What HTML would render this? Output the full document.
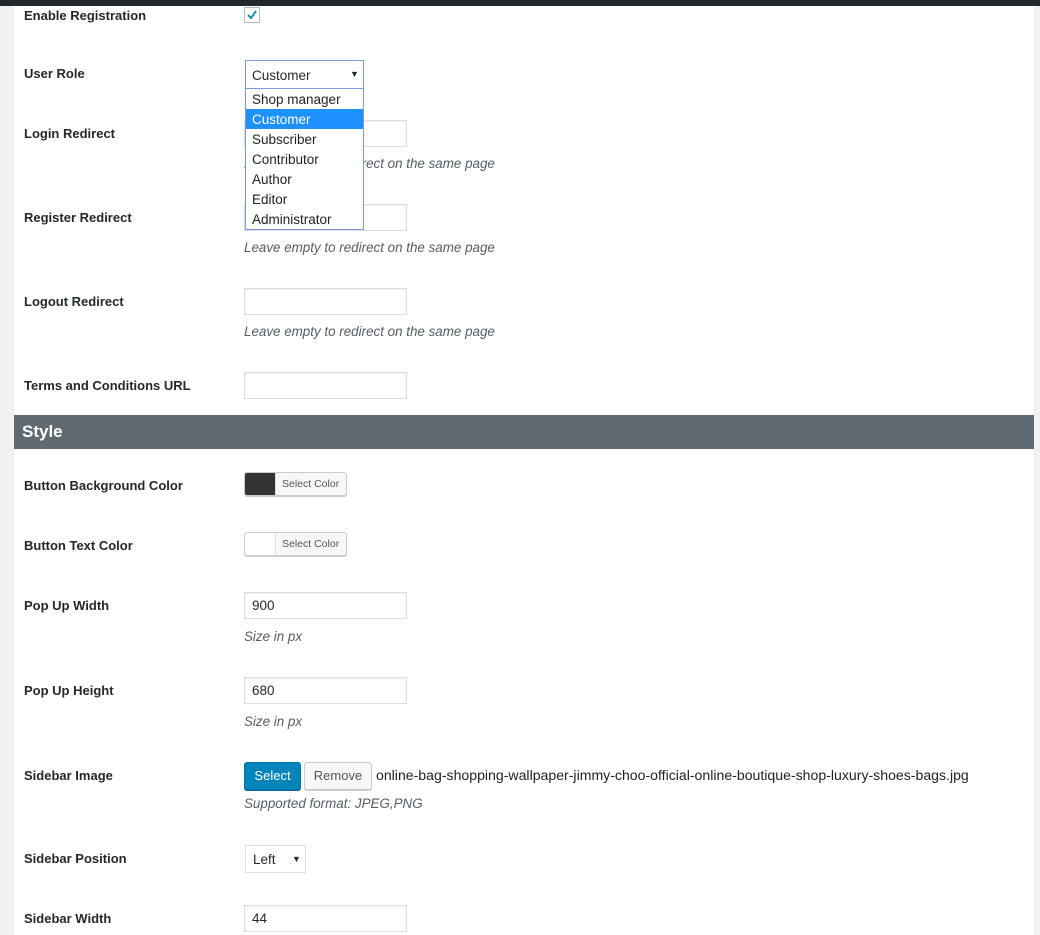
<!DOCTYPE html>
<html><head><style>
body{margin:0;width:1040px;height:935px;background:#f1f1f1;position:relative;overflow:hidden;font-family:"Liberation Sans",sans-serif;font-size:13px;color:#23282d}
.top{position:absolute;left:0;top:0;width:1040px;height:6px;background:#23282d}
.panel{position:absolute;left:14px;top:6px;width:1020px;height:929px;background:#fff}
.a{position:absolute;white-space:nowrap}
.lbl{position:absolute;left:24px;font-weight:bold;font-size:13px;color:#23282d}
.inp{position:absolute;left:244px;width:163px;height:27px;border:1px solid #ddd;background:#fff;box-shadow:inset 0 1px 2px rgba(0,0,0,.07);font-size:13.5px;line-height:25px;padding-left:7px;box-sizing:border-box}
.desc{position:absolute;left:244px;font-style:italic;color:#555d66;font-size:13.4px}
.bar{position:absolute;left:14px;top:415px;width:1020px;height:34px;background:#5f6a73;color:#fff;font-weight:bold;font-size:17px;line-height:34px;padding-left:8px;box-sizing:border-box}
.cp{position:absolute;left:244px;width:101px;height:22px;border:1px solid #ccc;border-radius:3px;background:#f7f7f7;box-shadow:0 1px 0 #ccc;overflow:hidden}
.cp .sw{position:absolute;left:0;top:0;width:30px;height:22px;border-right:1px solid #ddd}
.cp .t{position:absolute;left:37px;top:5px;font-size:10.5px;color:#555}
.dd{position:absolute;left:245px;top:88px;width:117px;height:140px;border:1px solid #7a9cd3;background:#fff}
.dd div{height:20px;line-height:21px;padding-left:6px;font-size:13.5px;color:#222}
.dd .s{background:#1e90ff;color:#fff}
</style></head><body>
<div class="top"></div>
<div class="panel"></div>

<div class="lbl" style="top:8px">Enable Registration</div>
<div class="a" style="left:244px;top:7px;width:14px;height:14px;border:1px solid #b4b9be;background:#fff"></div>
<svg class="a" style="left:245px;top:8px" width="14" height="14"><path d="M3 7 L6 10 L11 3" stroke="#1e8cbe" stroke-width="2" fill="none"/></svg>

<div class="lbl" style="top:66px">User Role</div>
<div class="a" style="left:245px;top:60px;width:117px;height:27px;border:1px solid #7a9cd3;background:#fff"><span class="a" style="left:6px;top:7px;font-size:13.5px">Customer</span><span class="a" style="left:104px;top:8px;font-size:9px">▼</span></div>

<div class="lbl" style="top:126px">Login Redirect</div>
<div class="inp" style="top:120px"></div>
<div class="desc" style="top:156px">Leave empty to redirect on the same page</div>

<div class="lbl" style="top:210px">Register Redirect</div>
<div class="inp" style="top:204px"></div>
<div class="desc" style="top:240px">Leave empty to redirect on the same page</div>

<div class="dd"><div>Shop manager</div><div class="s">Customer</div><div>Subscriber</div><div>Contributor</div><div>Author</div><div>Editor</div><div>Administrator</div></div>

<div class="lbl" style="top:294px">Logout Redirect</div>
<div class="inp" style="top:288px"></div>
<div class="desc" style="top:324px">Leave empty to redirect on the same page</div>

<div class="lbl" style="top:378px">Terms and Conditions URL</div>
<div class="inp" style="top:372px"></div>

<div class="bar">Style</div>

<div class="lbl" style="top:478px">Button Background Color</div>
<div class="cp" style="top:472px"><div class="sw" style="background:#333"></div><span class="t">Select Color</span></div>

<div class="lbl" style="top:538px">Button Text Color</div>
<div class="cp" style="top:532px"><div class="sw" style="background:#fff"></div><span class="t">Select Color</span></div>

<div class="lbl" style="top:598px">Pop Up Width</div>
<div class="inp" style="top:592px">900</div>
<div class="desc" style="top:629px">Size in px</div>

<div class="lbl" style="top:683px">Pop Up Height</div>
<div class="inp" style="top:677px">680</div>
<div class="desc" style="top:714px">Size in px</div>

<div class="lbl" style="top:768px">Sidebar Image</div>
<div class="a" style="left:244px;top:762px;width:55px;height:26px;background:#0085ba;border:1px solid #0073aa;border-radius:3px;color:#fff;line-height:26px;text-align:center;box-shadow:0 1px 0 #006799">Select</div>
<div class="a" style="left:304px;top:762px;width:66px;height:26px;background:#f7f7f7;border:1px solid #ccc;border-radius:3px;color:#555;line-height:26px;text-align:center;box-shadow:0 1px 0 #ccc">Remove</div>
<div class="a" style="left:376px;top:767px;font-size:14.1px;color:#222">online-bag-shopping-wallpaper-jimmy-choo-official-online-boutique-shop-luxury-shoes-bags.jpg</div>
<div class="desc" style="top:796px">Supported format: JPEG,PNG</div>

<div class="lbl" style="top:851px">Sidebar Position</div>
<div class="a" style="left:245px;top:845px;width:59px;height:26px;border:1px solid #ddd;background:#fff"><span class="a" style="left:7px;top:6px;font-size:13.5px">Left</span><span class="a" style="left:46px;top:8px;font-size:9px">▼</span></div>

<div class="lbl" style="top:911px">Sidebar Width</div>
<div class="inp" style="top:905px">44</div>
</body></html>
